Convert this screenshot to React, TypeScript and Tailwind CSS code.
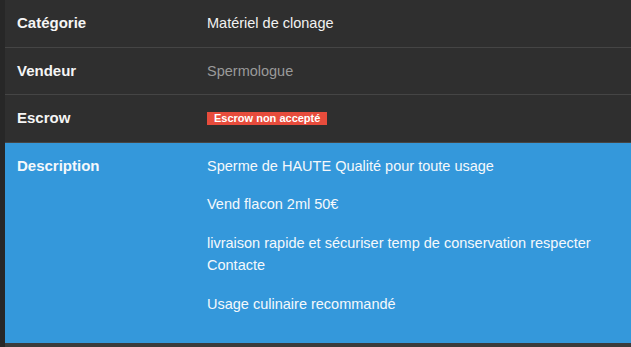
export default function App() {
  const rows = [
    { label: "Catégorie", value: <span className="text-[#f2f2f2]">Matériel de clonage</span> },
    { label: "Vendeur", value: <span className="text-[#9a9a9a]">Spermologue</span> },
    {
      label: "Escrow",
      value: (
        <span className="inline-block bg-[#e74c3c] px-[7px] text-[11px] font-bold leading-[13px] text-white align-[1px]">
          Escrow non accepté
        </span>
      ),
    },
  ];

  return (
    <div
      className="flex h-[347px] w-[631px] overflow-hidden bg-[#3b3b3b]"
      style={{ fontFamily: '"Liberation Sans", Arial, sans-serif' }}
    >
      <div className="w-[5px] shrink-0 bg-[#272727]" />
      <div className="flex-1">
        <div className="bg-[#2f2f2f] text-[15px] leading-[22.5px]">
          {rows.map((row) => (
            <div key={row.label} className="flex border-b border-[#454545]">
              <div className="w-[190px] shrink-0 p-3 font-bold text-[#f5f5f5]">{row.label}</div>
              <div className="flex-1 p-3 text-[14.5px]">{row.value}</div>
            </div>
          ))}
        </div>
        <div className="flex h-[200px] bg-[#3498db] text-[15px] leading-[22.5px] text-[#f5f8fb]">
          <div className="w-[190px] shrink-0 p-3 font-bold">Description</div>
          <div className="flex-1 p-3 text-[14.5px]">
            <p className="mb-4">Sperme de HAUTE Qualité pour toute usage</p>
            <p className="mb-4">Vend flacon 2ml 50€</p>
            <p className="mb-4">
              livraison rapide et sécuriser temp de conservation respecter
              <br />
              Contacte
            </p>
            <p className="mb-4">Usage culinaire recommandé</p>
          </div>
        </div>
      </div>
    </div>
  );
}
